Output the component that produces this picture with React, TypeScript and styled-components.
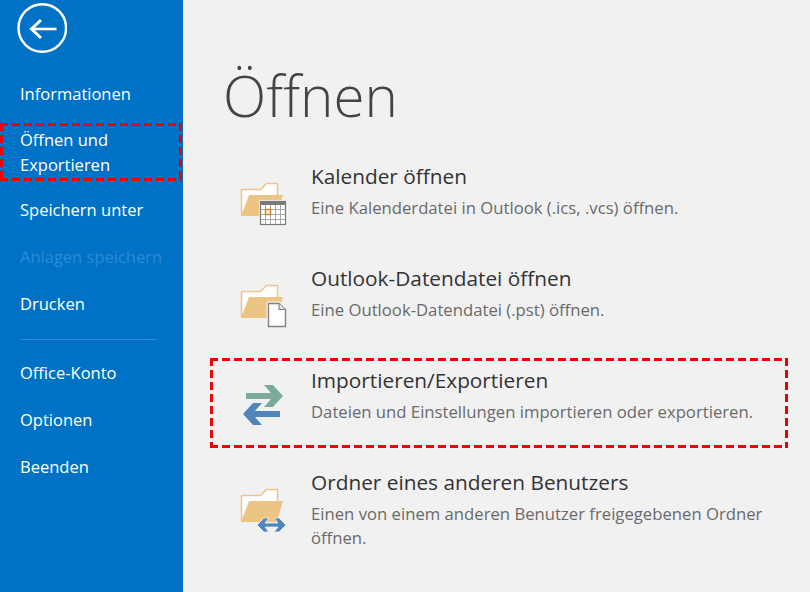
import React from 'react';
import styled, { createGlobalStyle, css } from 'styled-components';

const GlobalStyle = createGlobalStyle`
  html, body {
    margin: 0;
    padding: 0;
    width: 810px;
    height: 592px;
    overflow: hidden;
    background: #f1f1f1;
  }
  * { box-sizing: border-box; }
`;

// the red dashed marking drawn over the screenshot, dash 8 / gap 4
const dashedMark = css`
  background:
    repeating-linear-gradient(90deg, #f00000 0 8px, transparent 8px 12px) top / 100% 3px no-repeat,
    repeating-linear-gradient(90deg, #f00000 0 8px, transparent 8px 12px) bottom / 100% 3px no-repeat,
    repeating-linear-gradient(180deg, #f00000 0 8px, transparent 8px 12px) left / 3px 100% no-repeat,
    repeating-linear-gradient(180deg, #f00000 0 8px, transparent 8px 12px) right / 3px 100% no-repeat;
`;

const Page = styled.div`
  display: flex;
  width: 810px;
  height: 592px;
  font-family: 'Open Sans', 'Noto Sans', sans-serif;
`;

const Sidebar = styled.nav`
  width: 183px;
  flex: none;
  background: #0072c6;
  display: flex;
  flex-direction: column;
`;

const BackButton = styled.div`
  width: 50px;
  height: 50px;
  margin: 3px 0 0 17px;
`;

const NavGroup = styled.div`
  margin-top: 17px;
  display: flex;
  flex-direction: column;
`;

const NavItem = styled.div<{ $disabled?: boolean; $marked?: boolean }>`
  padding: 0 20px;
  height: 47px;
  display: flex;
  align-items: center;
  font-size: 16.5px;
  line-height: 25px;
  color: ${(p) => (p.$disabled ? '#2a8ad4' : '#ffffff')};
  ${(p) =>
    p.$marked &&
    css`
      height: 58px;
      width: 182px;
      margin: 6px 0 5px;
      ${dashedMark}
    `}
`;

const NavDivider = styled.div`
  height: 1px;
  width: 137px;
  margin: 12px 0 9px 20px;
  background: #2a8ad4;
`;

const Main = styled.main`
  flex: 1;
  display: flex;
  flex-direction: column;
  padding-left: 27px;
`;

const Title = styled.h1`
  margin: 56px 0 0 13px;
  font-size: 56.5px;
  line-height: 80px;
  font-weight: 300;
  color: #444444;
`;

const RowList = styled.div`
  margin-top: 14px;
  display: flex;
  flex-direction: column;
`;

const Row = styled.div<{ $marked?: boolean }>`
  width: 578px;
  height: 102px;
  padding: 12px 0 0 101px;
  position: relative;
  display: flex;
  flex-direction: column;
  ${(p) =>
    p.$marked &&
    css`
      height: 90px;
      margin: 4px 0 8px;
      padding-top: 8px;
      ${dashedMark}
    `}
`;

const IconSlot = styled.div<{ $marked?: boolean }>`
  position: absolute;
  left: 30px;
  top: ${(p) => (p.$marked ? 24 : 30)}px;
  width: 48px;
  height: 48px;
`;

const RowTitle = styled.div`
  font-size: 20.8px;
  line-height: 28px;
  color: #333333;
`;

const RowText = styled.div`
  margin-top: 6px;
  font-size: 16.7px;
  line-height: 24px;
  color: #6a6a6a;
`;

const Folder = () => (
  <>
    <path d="M1.5 35V9.5h19l6-6h11V16" fill="#fff" stroke="#edc687" strokeWidth="1.5" />
    <path d="M1 36L9 15h34l-6 21z" fill="#ecc585" />
  </>
);

const CalendarIcon = () => (
  <svg width="48" height="48" viewBox="0 0 48 48">
    <Folder />
    <rect x="19" y="20" width="28" height="25" fill="#f1f1f1" />
    <rect x="20.5" y="21.5" width="25" height="23" fill="#fff" stroke="#7a7a7a" strokeWidth="1.2" />
    <rect x="20" y="21" width="26" height="4" fill="#7a7a7a" />
    <path d="M25.5 25v19M30.5 25v19M35.5 25v19M40.5 25v19M21 29.5h24M21 34.5h24M21 39.5h24" stroke="#a8a8a8" strokeWidth="1" />
    <rect x="25.5" y="29.5" width="5" height="5" fill="#fff" stroke="#e07b20" strokeWidth="1.4" />
  </svg>
);

const FileIcon = () => (
  <svg width="48" height="48" viewBox="0 0 48 48">
    <Folder />
    <path d="M26.5 19.5h13.5l7 7v19.5h-20.5z" fill="#f1f1f1" />
    <path d="M28.5 21.5h10.5l6.5 6v17h-17z" fill="#fff" stroke="#808080" strokeWidth="1.4" />
    <path d="M39 21.5v6h6.5" fill="#e4e4e4" stroke="#808080" strokeWidth="1.1" />
  </svg>
);

const TransferIcon = () => (
  <svg width="48" height="48" viewBox="0 0 48 48">
    <polygon points="6,11 31,11 24,3 33,3 43,14 33,25 24,25 31,17 6,17" fill="#7dab9a" />
    <polygon points="40,29 15,29 22,21 13,21 3,32 13,43 22,43 15,35 40,35" fill="#4f86bb" />
  </svg>
);

const SharedIcon = () => (
  <svg width="48" height="48" viewBox="0 0 48 48">
    <Folder />
    <polygon
      points="17,39 24,32 29,32 25,37 38,37 34,32 39,32 46,39 39,46 34,46 38,41 25,41 29,46 24,46"
      fill="#4f86bb"
      stroke="#f1f1f1"
      strokeWidth="0.8"
    />
  </svg>
);

const App: React.FC = () => {
  return (
    <>
      <GlobalStyle />
      <Page>
        <Sidebar>
          <BackButton>
            <svg width="50" height="50" viewBox="0 0 50 50">
              <circle cx="25.3" cy="25" r="23.8" fill="none" stroke="#fff" strokeWidth="2.4" />
              <path d="M15 26h24.5" stroke="#fff" strokeWidth="2.6" fill="none" />
              <path d="M24 17l-9.5 9 9.5 9" stroke="#fff" strokeWidth="3" fill="none" />
            </svg>
          </BackButton>
          <NavGroup>
            <NavItem>Informationen</NavItem>
            <NavItem $marked>
              Öffnen und
              <br />
              Exportieren
            </NavItem>
            <NavItem>Speichern unter</NavItem>
            <NavItem $disabled>Anlagen speichern</NavItem>
            <NavItem>Drucken</NavItem>
            <NavDivider />
            <NavItem>Office-Konto</NavItem>
            <NavItem>Optionen</NavItem>
            <NavItem>Beenden</NavItem>
          </NavGroup>
        </Sidebar>
        <Main>
          <Title>Öffnen</Title>
          <RowList>
            <Row>
              <IconSlot>
                <CalendarIcon />
              </IconSlot>
              <RowTitle>Kalender öffnen</RowTitle>
              <RowText>Eine Kalenderdatei in Outlook (.ics, .vcs) öffnen.</RowText>
            </Row>
            <Row>
              <IconSlot>
                <FileIcon />
              </IconSlot>
              <RowTitle>Outlook-Datendatei öffnen</RowTitle>
              <RowText>Eine Outlook-Datendatei (.pst) öffnen.</RowText>
            </Row>
            <Row $marked>
              <IconSlot $marked>
                <TransferIcon />
              </IconSlot>
              <RowTitle>Importieren/Exportieren</RowTitle>
              <RowText>Dateien und Einstellungen importieren oder exportieren.</RowText>
            </Row>
            <Row>
              <IconSlot>
                <SharedIcon />
              </IconSlot>
              <RowTitle>Ordner eines anderen Benutzers</RowTitle>
              <RowText>
                Einen von einem anderen Benutzer freigegebenen Ordner
                <br />
                öffnen.
              </RowText>
            </Row>
          </RowList>
        </Main>
      </Page>
    </>
  );
};

export default App;
